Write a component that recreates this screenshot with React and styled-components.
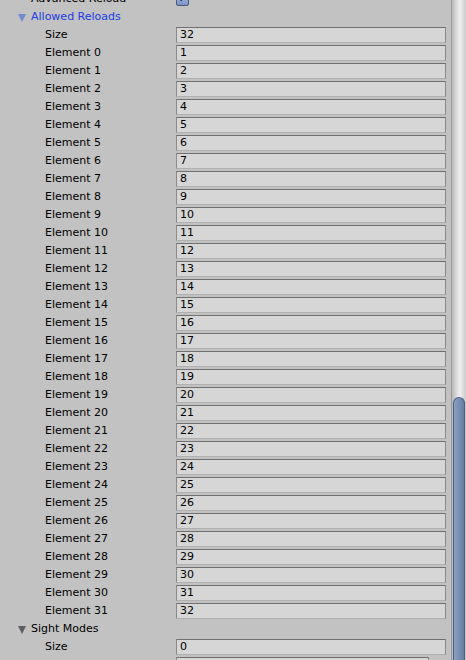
import React from "react";
import styled, { createGlobalStyle } from "styled-components";

const Global = createGlobalStyle`
  html, body { margin: 0; padding: 0; background: #c2c2c2; overflow: hidden; }
  body { font-family: "DejaVu Sans", "Noto Sans", sans-serif; font-size: 11px; }
`;

const Window = styled.div`
  display: flex;
  width: 466px;
  height: 660px;
  overflow: hidden;
  background: #c2c2c2;
`;

const Content = styled.div`
  flex: 1;
  display: flex;
  flex-direction: column;
  margin-top: -10px;
  padding-right: 5px;
`;

const Row = styled.div`
  display: flex;
  align-items: center;
  height: 18px;
  flex-shrink: 0;
`;

const Label = styled.div`
  width: 176px;
  flex-shrink: 0;
  box-sizing: border-box;
  padding-left: ${(p) => (p.$level === 2 ? 45 : p.$level === 1 ? 31 : 18)}px;
  color: ${(p) => (p.$active ? "#1a3be6" : "#000")};
  white-space: nowrap;
  line-height: 18px;
  display: flex;
  align-items: center;
`;

const Arrow = styled.span`
  width: 0;
  height: 0;
  border-left: 4.5px solid transparent;
  border-right: 4.5px solid transparent;
  border-top: 8px solid ${(p) => (p.$active ? "#6f8dce" : "#5e5e5e")};
  margin-right: 5px;
  margin-top: 1px;
`;

const Field = styled.div`
  flex: 1;
  height: 16px;
  box-sizing: border-box;
  background: #d6d6d6;
  border: 1px solid #9c9c9c;
  border-top-color: #707070;
  border-left-color: #8a8a8a;
  border-right-color: #8a8a8a;
  border-bottom-color: #b0b0b0;
  padding-left: 3px;
  line-height: 14px;
  color: #000;
  display: flex;
  align-items: center;
  gap: 4px;
  ${(p) => (p.$narrow ? "flex: 0 0 253px;" : "")}
`;

const Check = styled.div`
  width: 13px;
  height: 13px;
  box-sizing: border-box;
  border-radius: 2px;
  border: 1px solid #4a5a78;
  background: linear-gradient(#a8bde6, #7b93c8);
  display: flex;
  align-items: center;
  justify-content: center;
  color: #1c2740;
  font-size: 9px;
`;

const ObjIcon = styled.span`
  width: 8px;
  height: 8px;
  border-radius: 50%;
  background: #c9b680;
`;

const Scrollbar = styled.div`
  width: 15px;
  flex-shrink: 0;
  height: 660px;
  box-sizing: border-box;
  border-left: 1px solid #9a9a9a;
  background: linear-gradient(90deg, #b9b9b9 0%, #e6e6e6 45%, #eeeeee 60%, #c8c8c8 100%);
  display: flex;
  flex-direction: column;
  padding-top: 397px;
  padding-left: 1px;
  padding-right: 1px;
`;

const Thumb = styled.div`
  flex: 1;
  border-radius: 7px 7px 0 0;
  border: 1px solid #4b5c7e;
  border-bottom: none;
  background: linear-gradient(90deg, #8d9fc2 0%, #7d90b5 40%, #6a7da3 100%);
`;

export default function App() {
  const values = Array.from({ length: 32 }, (_, i) => i);
  return (
    <Window>
      <Global />
      <Content>
        <Row>
          <Label $level={1}>Advanced Reload</Label>
          <Check>✓</Check>
        </Row>
        <Row>
          <Label $level={0} $active>
            <Arrow $active />
            Allowed Reloads
          </Label>
        </Row>
        <Row>
          <Label $level={2}>Size</Label>
          <Field>32</Field>
        </Row>
        {values.map((i) => (
          <Row key={i}>
            <Label $level={2}>Element {i}</Label>
            <Field>{i + 1}</Field>
          </Row>
        ))}
        <Row>
          <Label $level={0}>
            <Arrow />
            Sight Modes
          </Label>
        </Row>
        <Row>
          <Label $level={2}>Size</Label>
          <Field>0</Field>
        </Row>
        <Row>
          <Label $level={1}>Lock Audio Clip</Label>
          <Field $narrow>
            <ObjIcon />
            None (Audio Clip)
          </Field>
        </Row>
      </Content>
      <Scrollbar>
        <Thumb />
      </Scrollbar>
    </Window>
  );
}
